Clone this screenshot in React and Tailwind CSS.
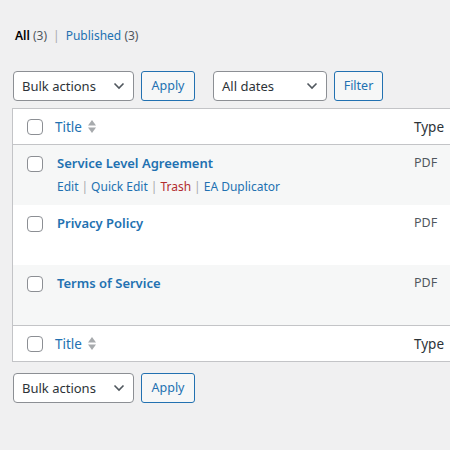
import React from 'react';

const font = { fontFamily: '"Noto Sans", "Open Sans", sans-serif' };

const Chevron = () => (
  <svg width="12" height="8" viewBox="0 0 12 8" className="shrink-0">
    <path d="M1.5 1.5 L6 6 L10.5 1.5" fill="none" stroke="#50575e" strokeWidth="1.6" />
  </svg>
);

const Select = ({ label, width }) => (
  <div
    className={`flex items-center justify-between h-[30px] pl-[8px] pr-[8px] border border-[#8c8f94] rounded-[4px] bg-white text-[13px] text-[#2c3338] ${width}`}
  >
    <span className="pt-[1px]">{label}</span>
    <Chevron />
  </div>
);

const Button = ({ label, width }) => (
  <div
    className={`flex items-center justify-center h-[30px] pt-[1px] border border-[#2271b1] rounded-[3px] bg-[#f6f7f7] text-[12.5px] text-[#2271b1] ${width}`}
  >
    {label}
  </div>
);

const Checkbox = () => (
  <div className="w-4 h-4 border border-[#8c8f94] rounded-[4px] bg-white shrink-0" />
);

const SortIcon = () => (
  <svg width="10" height="15" viewBox="0 0 10 15" className="ml-[5px]">
    <path d="M5 1 L9 6.5 L1 6.5 Z" fill="#a7aaad" />
    <path d="M1 8.5 L9 8.5 L5 14 Z" fill="#a7aaad" />
  </svg>
);

const HeaderRow = ({ bottom }) => (
  <div
    className={`flex items-center h-[36px] ${bottom ? 'border-t' : 'border-b'} border-[#c3c4c7]`}
  >
    <div className="w-[42px] flex justify-center pl-[1px]">
      <Checkbox />
    </div>
    <div className="flex items-center w-[359px] text-[13.5px] text-[#2271b1]">
      <span className="pt-[1px]">Title</span>
      <SortIcon />
    </div>
    <div className="text-[13.5px] text-[#2c3338] pt-[1px]">Type</div>
  </div>
);

const Sep = () => <span className="text-[#a7aaad] mx-[3px]">|</span>;

const Row = ({ title, striped, actions }) => (
  <div className={`flex items-start h-[60px] pt-[9px] ${striped ? 'bg-[#f6f7f7]' : 'bg-white'}`}>
    <div className="w-[42px] flex justify-center pl-[1px] pt-[2px]">
      <Checkbox />
    </div>
    <div className="w-[359px] pl-[2px]">
      <div className="text-[13px] font-semibold text-[#2271b1] leading-[18px]">{title}</div>
      {actions && (
        <div className="text-[12px] text-[#2271b1] mt-[7px] leading-[16px]">
          Edit<Sep />Quick Edit<Sep />
          <span className="text-[#b32d2e]">Trash</span>
          <Sep />EA Duplicator
        </div>
      )}
    </div>
    <div className="text-[12.5px] text-[#50575e] leading-[18px]">PDF</div>
  </div>
);

export default function App() {
  return (
    <div className="w-[450px] h-[450px] overflow-hidden bg-[#f0f0f1]" style={font}>
      <div className="pt-[27px] pl-[15px] text-[12px] leading-[18px]">
        <span className="font-semibold text-black">All</span>{' '}
        <span className="text-[#50575e]">(3)</span>
        <span className="text-[#a7aaad] mx-[6px]">|</span>
        <span className="text-[#2271b1]">Published</span>{' '}
        <span className="text-[#50575e]">(3)</span>
      </div>

      <div className="flex items-center pl-[13px] mt-[26px]">
        <Select label="Bulk actions" width="w-[121px]" />
        <div className="ml-[7px]">
          <Button label="Apply" width="w-[54px]" />
        </div>
        <div className="ml-[18px]">
          <Select label="All dates" width="w-[114px]" />
        </div>
        <div className="ml-[7px]">
          <Button label="Filter" width="w-[49px]" />
        </div>
      </div>

      <div className="ml-[12px] mt-[7px] w-[500px] border border-[#c3c4c7] bg-white">
        <HeaderRow />
        <Row title="Service Level Agreement" striped actions />
        <Row title="Privacy Policy" />
        <Row title="Terms of Service" striped />
        <HeaderRow bottom />
      </div>

      <div className="flex items-center pl-[13px] mt-[11px]">
        <Select label="Bulk actions" width="w-[121px]" />
        <div className="ml-[7px]">
          <Button label="Apply" width="w-[54px]" />
        </div>
      </div>
    </div>
  );
}
